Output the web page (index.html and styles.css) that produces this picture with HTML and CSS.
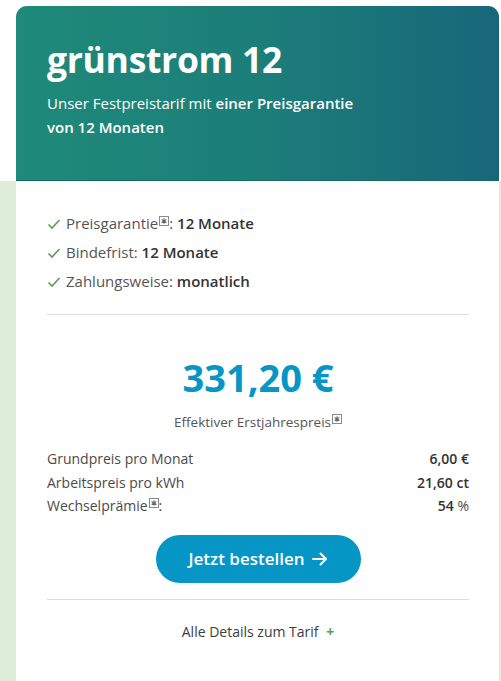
FILE: index.html
```html
<!DOCTYPE html>
<html lang="de">
<head>
<meta charset="utf-8">
<title>grünstrom 12</title>
<link rel="stylesheet" href="styles.css">
</head>
<body>
<div class="page">
  <header class="hero">
    <h1 class="hero-title">grünstrom 12</h1>
    <p class="hero-sub">Unser Festpreistarif mit <strong>einer Preisgarantie von 12 Monaten</strong></p>
  </header>
  <div class="panel-wrap">
    <main class="panel">
      <ul class="features">
        <li><svg class="check" viewBox="0 0 14 12" width="14" height="12"><path d="M1.5 6.5 L5 10 L12.5 2" fill="none" stroke="#5a9e4b" stroke-width="1.6"/></svg>Preisgarantie<svg class="info" viewBox="0 0 10 10" width="10" height="10"><rect x="0.5" y="0.5" width="9" height="9" fill="#fff" stroke="#8a8a8a"/><path d="M5 2.2 V7.8 M2.6 3.6 L7.4 6.4 M2.6 6.4 L7.4 3.6" stroke="#666" stroke-width="1.1"/></svg>: <b>12 Monate</b></li>
        <li><svg class="check" viewBox="0 0 14 12" width="14" height="12"><path d="M1.5 6.5 L5 10 L12.5 2" fill="none" stroke="#5a9e4b" stroke-width="1.6"/></svg>Bindefrist: <b>12 Monate</b></li>
        <li><svg class="check" viewBox="0 0 14 12" width="14" height="12"><path d="M1.5 6.5 L5 10 L12.5 2" fill="none" stroke="#5a9e4b" stroke-width="1.6"/></svg>Zahlungsweise: <b>monatlich</b></li>
      </ul>
      <hr class="divider">
      <div class="price">331,20 €</div>
      <div class="price-label">Effektiver Erstjahrespreis<svg class="info" viewBox="0 0 10 10" width="10" height="10"><rect x="0.5" y="0.5" width="9" height="9" fill="#fff" stroke="#8a8a8a"/><path d="M5 2.2 V7.8 M2.6 3.6 L7.4 6.4 M2.6 6.4 L7.4 3.6" stroke="#666" stroke-width="1.1"/></svg></div>
      <dl class="rows">
        <div class="row"><dt>Grundpreis pro Monat</dt><dd><b>6,00 €</b></dd></div>
        <div class="row"><dt>Arbeitspreis pro kWh</dt><dd><b>21,60 ct</b></dd></div>
        <div class="row"><dt>Wechselprämie<svg class="info" viewBox="0 0 10 10" width="10" height="10"><rect x="0.5" y="0.5" width="9" height="9" fill="#fff" stroke="#8a8a8a"/><path d="M5 2.2 V7.8 M2.6 3.6 L7.4 6.4 M2.6 6.4 L7.4 3.6" stroke="#666" stroke-width="1.1"/></svg>:</dt><dd><b>54</b> %</dd></div>
      </dl>
      <div class="cta-wrap"><a class="cta" href="#">Jetzt bestellen<svg class="arrow" viewBox="0 0 16 14" width="16" height="14"><path d="M1 7 H14 M8.5 1.5 L14 7 L8.5 12.5" fill="none" stroke="#fff" stroke-width="2" stroke-linecap="round" stroke-linejoin="round"/></svg></a></div>
      <hr class="divider divider-bottom">
      <div class="details">Alle Details zum Tarif <span class="plus">+</span></div>
    </main>
  </div>
</div>
</body>
</html>
```
FILE: styles.css
```css
html, body {
  margin: 0;
  padding: 0;
  background: #fff;
}
body {
  font-family: "Open Sans", "Noto Sans", sans-serif;
  color: #3c3c3c;
}
.page {
  padding-top: 6px;
}
.hero {
  margin: 0 2px 0 16px;
  height: 175px;
  box-sizing: border-box;
  padding: 32px 31px 0;
  border-radius: 11px 11px 0 0;
  background: linear-gradient(90deg, #1f8a79 0%, #1c7e79 50%, #186779 100%);
  border-bottom: 1px solid #156a60;
  color: #fff;
}
.hero-title {
  margin: 0;
  font-size: 35.5px;
  line-height: 43px;
  font-weight: 700;
  letter-spacing: -0.3px;
}
.hero-sub {
  margin: 10px 0 0;
  font-size: 15px;
  line-height: 24px;
  width: 318px;
}
.hero-sub strong {
  font-weight: 600;
}
.panel-wrap {
  background: #deedd8;
  padding: 0 2px 0 16px;
}
.panel {
  background: #fff;
  padding: 28px 30px 40px 31px;
}
.features {
  list-style: none;
  margin: 0;
  padding: 0;
  font-size: 15px;
  line-height: 29px;
  color: #555;
}
.features b, .rows b {
  font-weight: 600;
  color: #333;
}
.check {
  vertical-align: -1px;
  margin-right: 5px;
}
.info {
  vertical-align: 3px;
  margin-left: 1px;
}
.divider {
  border: 0;
  border-top: 1px solid #dcdcdc;
  margin: 18px 0 0;
}
.price {
  margin-top: 39px;
  text-align: center;
  font-size: 38px;
  line-height: 46px;
  font-weight: 700;
  color: #0596c6;
}
.price-label {
  margin-top: 13px;
  text-align: center;
  font-size: 13.5px;
  line-height: 18px;
  color: #555;
}
.rows {
  margin: 16px 0 0;
  font-size: 14px;
  line-height: 23.5px;
  color: #4a4a4a;
}
.row {
  display: flex;
  justify-content: space-between;
}
.row dt, .row dd {
  margin: 0;
}
.cta-wrap {
  display: flex;
  justify-content: center;
  margin-top: 17px;
}
.cta {
  display: flex;
  align-items: center;
  justify-content: center;
  gap: 7px;
  width: 205px;
  height: 48px;
  border-radius: 24px;
  background: #0596c6;
  color: #fff;
  text-decoration: none;
  font-size: 17px;
  font-weight: 600;
}
.arrow {
  margin-top: 1px;
}
.divider-bottom {
  margin-top: 16px;
}
.details {
  margin-top: 22px;
  text-align: center;
  font-size: 14px;
  line-height: 20px;
  color: #3c3c3c;
}
.plus {
  color: #5a9e4b;
  font-weight: 700;
  margin-left: 4px;
}
```
